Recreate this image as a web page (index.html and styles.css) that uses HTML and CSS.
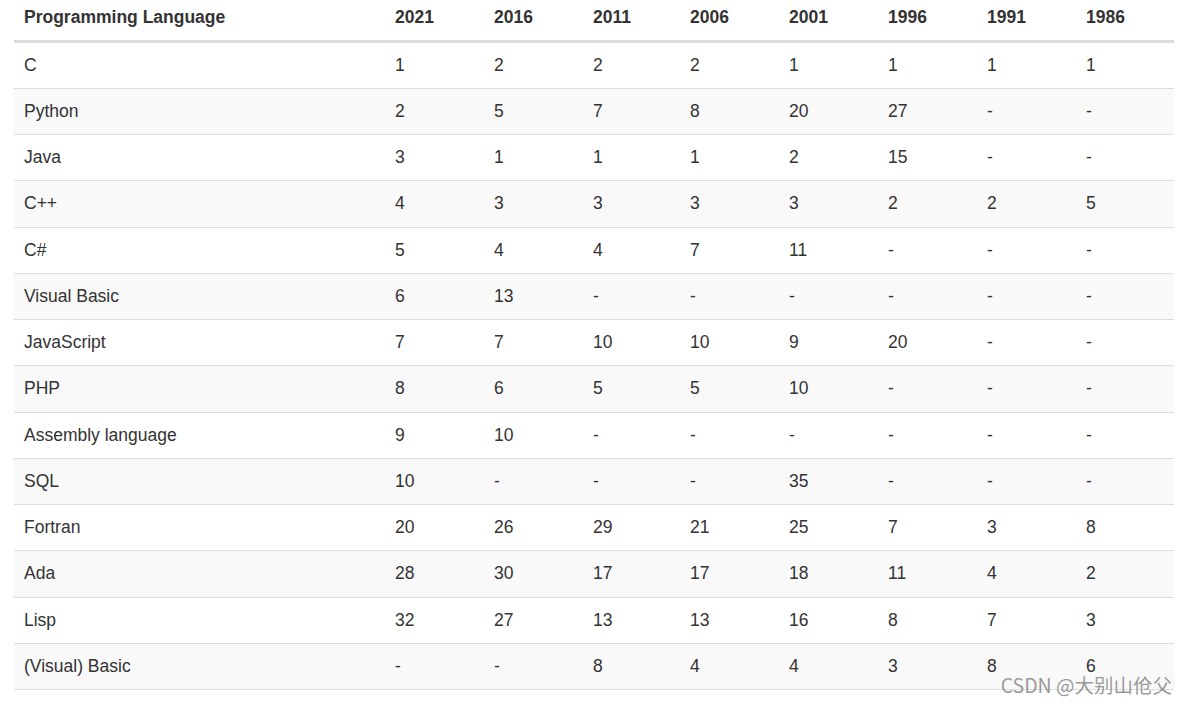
FILE: index.html
```html
<!DOCTYPE html>
<html lang="en">
<head>
<meta charset="utf-8">
<title>Programming Language Ranking</title>
<link rel="stylesheet" href="styles.css">
</head>
<body>
<div class="page">
  <table class="rank-table">
    <colgroup>
      <col class="col-name">
      <col class="col-99"><col class="col-99"><col class="col-97"><col class="col-99"><col class="col-99"><col class="col-99"><col class="col-99"><col class="col-98">
    </colgroup>
    <thead>
      <tr><th>Programming Language</th><th>2021</th><th>2016</th><th>2011</th><th>2006</th><th>2001</th><th>1996</th><th>1991</th><th>1986</th></tr>
    </thead>
    <tbody>
      <tr><td>C</td><td>1</td><td>2</td><td>2</td><td>2</td><td>1</td><td>1</td><td>1</td><td>1</td></tr>
      <tr><td>Python</td><td>2</td><td>5</td><td>7</td><td>8</td><td>20</td><td>27</td><td>-</td><td>-</td></tr>
      <tr><td>Java</td><td>3</td><td>1</td><td>1</td><td>1</td><td>2</td><td>15</td><td>-</td><td>-</td></tr>
      <tr><td>C++</td><td>4</td><td>3</td><td>3</td><td>3</td><td>3</td><td>2</td><td>2</td><td>5</td></tr>
      <tr><td>C#</td><td>5</td><td>4</td><td>4</td><td>7</td><td>11</td><td>-</td><td>-</td><td>-</td></tr>
      <tr><td>Visual Basic</td><td>6</td><td>13</td><td>-</td><td>-</td><td>-</td><td>-</td><td>-</td><td>-</td></tr>
      <tr><td>JavaScript</td><td>7</td><td>7</td><td>10</td><td>10</td><td>9</td><td>20</td><td>-</td><td>-</td></tr>
      <tr><td>PHP</td><td>8</td><td>6</td><td>5</td><td>5</td><td>10</td><td>-</td><td>-</td><td>-</td></tr>
      <tr><td>Assembly language</td><td>9</td><td>10</td><td>-</td><td>-</td><td>-</td><td>-</td><td>-</td><td>-</td></tr>
      <tr><td>SQL</td><td>10</td><td>-</td><td>-</td><td>-</td><td>35</td><td>-</td><td>-</td><td>-</td></tr>
      <tr><td>Fortran</td><td>20</td><td>26</td><td>29</td><td>21</td><td>25</td><td>7</td><td>3</td><td>8</td></tr>
      <tr><td>Ada</td><td>28</td><td>30</td><td>17</td><td>17</td><td>18</td><td>11</td><td>4</td><td>2</td></tr>
      <tr><td>Lisp</td><td>32</td><td>27</td><td>13</td><td>13</td><td>16</td><td>8</td><td>7</td><td>3</td></tr>
      <tr><td>(Visual) Basic</td><td>-</td><td>-</td><td>8</td><td>4</td><td>4</td><td>3</td><td>8</td><td>6</td></tr>
    </tbody>
  </table>
  <div class="watermark">CSDN @大别山伧父</div>
</div>
</body>
</html>
```

FILE: styles.css
```css
html, body {
  margin: 0;
  padding: 0;
  background: #ffffff;
}

.page {
  position: relative;
  padding-left: 14px;
  height: 704px;
  overflow: hidden;
  font-family: "Liberation Sans", Arial, "Noto Sans CJK SC", sans-serif;
  color: #333333;
}

.rank-table {
  width: 1160px;
  table-layout: fixed;
  border-collapse: collapse;
  border-spacing: 0;
  font-size: 17.5px;
  line-height: 25px;
}

.col-name { width: 371px; }
.col-99 { width: 99px; }
.col-97 { width: 97px; }
.col-98 { width: 98px; }

.rank-table th {
  text-align: left;
  font-weight: bold;
  padding: 4.5px 10px 10px;
  border-bottom: 3px solid #dddddd;
  vertical-align: bottom;
}

.rank-table td {
  text-align: left;
  padding: 10px 10px 10.25px;
  border-top: 1px solid #dddddd;
  vertical-align: top;
}

.rank-table tbody tr:nth-of-type(even) {
  background: #f9f9f9;
}

.rank-table tbody tr:last-child td {
  border-bottom: 1px solid #dddddd;
}

.watermark {
  position: absolute;
  right: 15px;
  top: 672px;
  font-family: "Noto Sans CJK SC", "Liberation Sans", sans-serif;
  font-size: 19.5px;
  line-height: 26px;
  color: rgba(120, 120, 120, 0.75);
  white-space: nowrap;
}
```
